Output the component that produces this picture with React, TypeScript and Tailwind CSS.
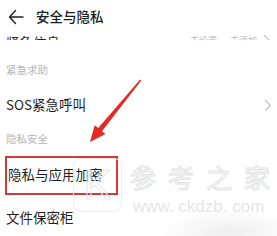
import React from 'react';

const font = "font-['Noto_Sans_CJK_SC','Noto_Sans',sans-serif]";

const BackIcon = () => (
  <svg width="16" height="16" viewBox="0 0 16 16" fill="none" stroke="#222" strokeWidth="1.4" strokeLinecap="round" strokeLinejoin="round">
    <path d="M15 8H1.5M7.5 1.5L1.5 8l6 6.5" />
  </svg>
);

const Chevron = ({ color = '#c4c4c4' }: { color?: string }) => (
  <svg width="8" height="13" viewBox="0 0 8 13" fill="none" stroke={color} strokeWidth="1.3" strokeLinecap="round" strokeLinejoin="round">
    <path d="M1.5 1.5l5 5-5 5" />
  </svg>
);

// 标注箭头
const RedArrow = () => (
  <svg className="absolute left-0 top-0 pointer-events-none" width="277" height="236" viewBox="0 0 277 236">
    <polygon
      points="90,142 105.5,134 102,131.2 141.3,80.5 140.1,79.5 98.2,128 94.7,125.2"
      fill="#e42a22"
    />
  </svg>
);

// 水印
const Watermark = () => (
  <div className="absolute left-[73px] top-[158px] flex items-start gap-[8px] pointer-events-none whitespace-nowrap">
    <div className="w-[49px] h-[54px] rounded-[8px] border border-[#eeeeee] flex items-center justify-center text-[42px] leading-none text-transparent [-webkit-text-stroke:1px_#e8e8e8] font-['Liberation_Sans',sans-serif]">
      K
    </div>
    <div className="flex flex-col items-start pt-[4px]">
      <div className={`${font} flex gap-[12px] text-[26px] leading-[30px] text-transparent [-webkit-text-stroke:1px_#e2e2e2]`}>
        {['参', '考', '之', '家'].map((c) => (
          <span key={c}>{c}</span>
        ))}
      </div>
      <div className="font-['Liberation_Sans',sans-serif] text-[17px] leading-[18px] text-[#e6e6e6] mt-[6px] ml-[3px]">
        www. ckdzb. com
      </div>
    </div>
  </div>
);

export default function App() {
  return (
    <div className={`relative w-[277px] h-[236px] overflow-hidden bg-white ${font}`}>
      {/* 标题栏 */}
      <div className="h-[35px] flex items-center pl-[8px] gap-[12px] bg-white pb-[1px]">
        <BackIcon />
        <span className="text-[13.5px] font-medium text-[#1c1c1c] leading-none">安全与隐私</span>
      </div>

      {/* 被遮住的上一行 */}
      <div className="h-[5px] overflow-hidden flex items-end justify-between pl-[6px] pr-[6px]">
        <span className="text-[13.5px] leading-[13px] text-[#222] translate-y-[9px] whitespace-nowrap">紧急信息</span>
        <span className="flex items-center gap-[6px] translate-y-[7px] whitespace-nowrap">
          <span className="text-[9px] leading-[10px] text-[#b8b8b8]">未设置 · 去添加</span>
          <Chevron />
        </span>
      </div>

      <div className="h-[15px]" />

      <div className="h-[30px] flex items-center pl-[6px]">
        <span className="text-[10.5px] text-[#b5b5b5] leading-none">紧急求助</span>
      </div>

      <div className="h-[40px] flex items-center justify-between pl-[6px] pr-[5px]">
        <span className="text-[13.5px] text-[#1e1e1e] leading-none">SOS紧急呼叫</span>
        <Chevron />
      </div>

      <div className="h-[28px] flex items-center pl-[6px]">
        <span className="text-[10.5px] text-[#b5b5b5] leading-none">隐私安全</span>
      </div>

      <div className="h-[44px] flex items-center">
        <div className="ml-[5px] w-[113px] h-[39px] border-2 border-[#d23a3a] flex items-center pl-[1px]">
          <span className="text-[13.5px] text-[#1e1e1e] leading-none whitespace-nowrap">隐私与应用加密</span>
        </div>
      </div>

      <div className="h-[42px] flex items-center pl-[6px]">
        <span className="text-[13.5px] text-[#1e1e1e] leading-none">文件保密柜</span>
      </div>

      {/* 右下角阴影 */}
      <div className="absolute left-[160px] top-[208px] w-[140px] h-[50px] pointer-events-none bg-[radial-gradient(ellipse_at_center,#eeeeee_0%,rgba(255,255,255,0)_70%)]" />

      <Watermark />
      <RedArrow />
    </div>
  );
}
